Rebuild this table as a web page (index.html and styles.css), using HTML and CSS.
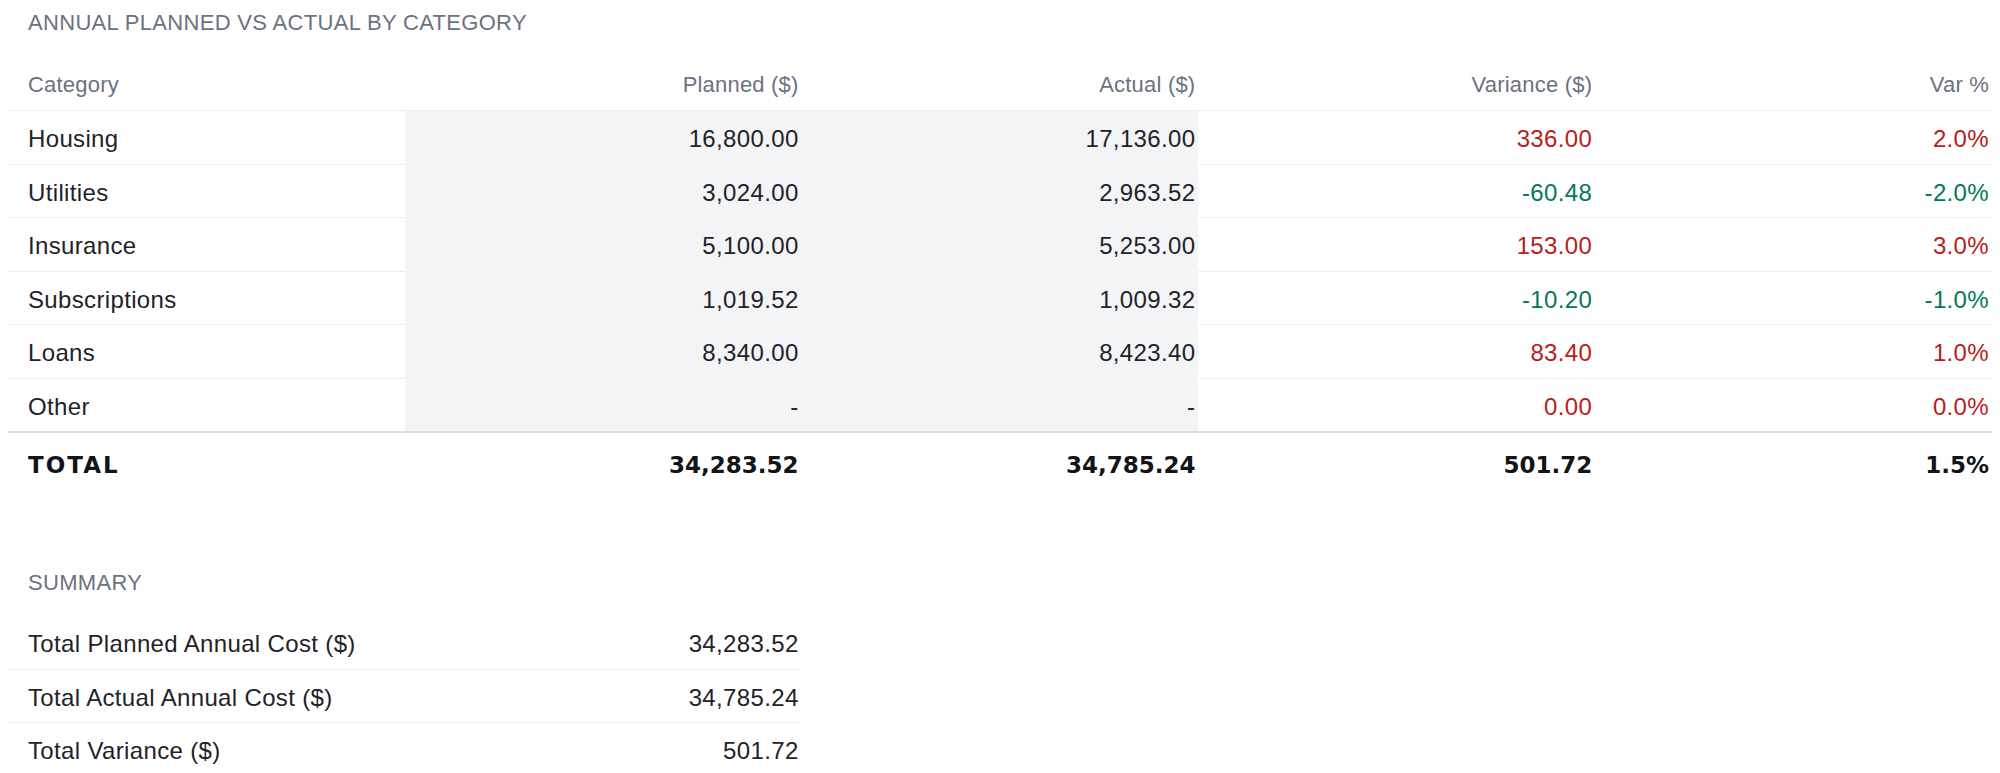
FILE: index.html
```html
<!DOCTYPE html>
<html lang="en">
<head>
<meta charset="utf-8">
<title>Annual Planned vs Actual by Category</title>
<link rel="stylesheet" href="styles.css">
</head>
<body>
<div class="page">
  <section class="section">
    <div class="section-title">ANNUAL PLANNED VS ACTUAL BY CATEGORY</div>
    <table class="grid">
      <thead>
        <tr>
          <th class="lbl">Category</th>
          <th class="num">Planned ($)</th>
          <th class="num">Actual ($)</th>
          <th class="num">Variance ($)</th>
          <th class="num">Var %</th>
        </tr>
      </thead>
      <tbody>
        <tr>
          <td class="lbl">Housing</td>
          <td class="num shade">16,800.00</td>
          <td class="num shade">17,136.00</td>
          <td class="num over">336.00</td>
          <td class="num over">2.0%</td>
        </tr>
        <tr>
          <td class="lbl">Utilities</td>
          <td class="num shade">3,024.00</td>
          <td class="num shade">2,963.52</td>
          <td class="num under">-60.48</td>
          <td class="num under">-2.0%</td>
        </tr>
        <tr>
          <td class="lbl">Insurance</td>
          <td class="num shade">5,100.00</td>
          <td class="num shade">5,253.00</td>
          <td class="num over">153.00</td>
          <td class="num over">3.0%</td>
        </tr>
        <tr>
          <td class="lbl">Subscriptions</td>
          <td class="num shade">1,019.52</td>
          <td class="num shade">1,009.32</td>
          <td class="num under">-10.20</td>
          <td class="num under">-1.0%</td>
        </tr>
        <tr>
          <td class="lbl">Loans</td>
          <td class="num shade">8,340.00</td>
          <td class="num shade">8,423.40</td>
          <td class="num over">83.40</td>
          <td class="num over">1.0%</td>
        </tr>
        <tr>
          <td class="lbl">Other</td>
          <td class="num shade">-</td>
          <td class="num shade">-</td>
          <td class="num over">0.00</td>
          <td class="num over">0.0%</td>
        </tr>
      </tbody>
      <tfoot>
        <tr>
          <td class="lbl total-label">TOTAL</td>
          <td class="num">34,283.52</td>
          <td class="num">34,785.24</td>
          <td class="num">501.72</td>
          <td class="num">1.5%</td>
        </tr>
      </tfoot>
    </table>
  </section>

  <section class="section summary">
    <div class="section-title summary-title">SUMMARY</div>
    <table class="grid summary-grid">
      <tbody>
        <tr>
          <td class="lbl">Total Planned Annual Cost ($)</td>
          <td class="num">34,283.52</td>
        </tr>
        <tr>
          <td class="lbl">Total Actual Annual Cost ($)</td>
          <td class="num">34,785.24</td>
        </tr>
        <tr>
          <td class="lbl">Total Variance ($)</td>
          <td class="num">501.72</td>
        </tr>
      </tbody>
    </table>
  </section>
</div>
</body>
</html>
```

FILE: styles.css
```css
html, body {
  margin: 0;
  padding: 0;
  background: #ffffff;
}

body {
  font-family: "Liberation Sans", Arial, sans-serif;
  color: #1f2328;
}

.page {
  padding: 10px 8px 0;
}

.section-title {
  font-size: 22px;
  line-height: 25px;
  color: #6b7280;
  padding-left: 20px;
  letter-spacing: 0.32px;
  margin-bottom: 24px;
}

.grid {
  width: 100%;
  table-layout: fixed;
  border-collapse: separate;
  border-spacing: 0;
}

.grid th {
  font-size: 22px;
  line-height: 25px;
  font-weight: normal;
  color: #6b7280;
  letter-spacing: 0.2px;
  padding: 13px 3px 13px 20px;
  border-bottom: 1px solid #eceef0;
}

.grid td {
  font-size: 24px;
  line-height: 26.5px;
  letter-spacing: 0.35px;
  padding: 15px 3px 11px 20px;
  border-bottom: 1px solid #eceef0;
  white-space: nowrap;
}

.grid .lbl {
  text-align: left;
}

.grid .num {
  text-align: right;
}

.grid td.shade {
  background: #f3f4f6;
  border-bottom-color: #f3f4f6;
}

.grid tbody tr:last-child td {
  border-bottom: none;
}

.grid td.over {
  color: #b91c1c;
}

.grid td.under {
  color: #047857;
}

.grid tfoot td {
  font-family: "DejaVu Sans", "Liberation Sans", sans-serif;
  font-weight: bold;
  font-size: 23px;
  line-height: 26px;
  letter-spacing: 0;
  color: #111418;
  border-top: 2px solid #dcdde0;
  border-bottom: none;
  padding-top: 19px;
  padding-bottom: 18px;
}

.grid tfoot td.total-label {
  letter-spacing: 2px;
}

.summary {
  margin-top: 74px;
}

.summary-title {
  margin-bottom: 21px;
}

.summary-grid {
  width: 40%;
}

.summary-grid tbody tr:last-child td {
  border-bottom: 1px solid #eceef0;
}
```
